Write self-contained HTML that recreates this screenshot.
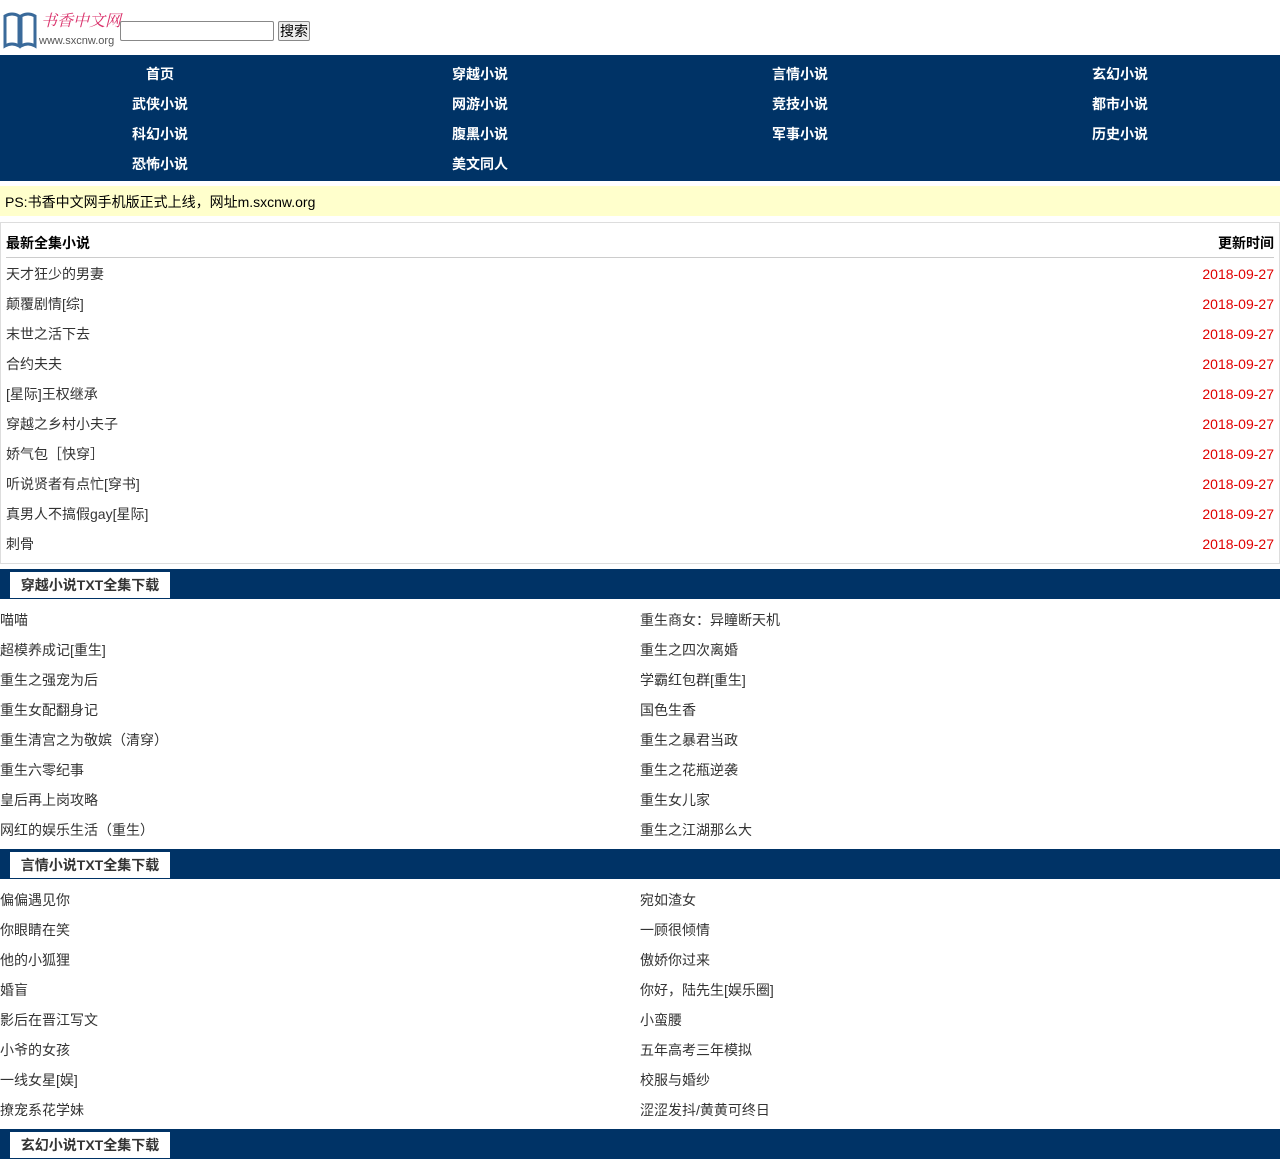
<!DOCTYPE html>
<html><head><meta charset="utf-8"><style>
*{margin:0;padding:0;box-sizing:border-box}
body{width:1280px;height:1167px;overflow:hidden;background:#fff;font-family:"Liberation Sans","Noto Sans CJK SC",sans-serif;font-size:14px;color:#333}
.head{height:55px;position:relative}
.logo{position:absolute;left:2px;top:8px;width:110px;height:42px}
.logo .t1{position:absolute;left:39px;top:1px;font-family:"Noto Serif CJK SC",serif;color:#d9306a;font-size:16px;letter-spacing:0;line-height:22px;white-space:nowrap;font-style:italic}
.logo .t2{position:absolute;left:37px;top:27px;font-size:11px;color:#555;line-height:13px;white-space:nowrap}
.search{position:absolute;left:120px;top:21px}
.search input{width:154px;height:20px;border:1px solid #888;border-radius:2px;vertical-align:top}
.search button{height:20px;font-size:14px;padding:0 1px;border:1px solid #888;border-radius:2px;background:#eee;vertical-align:top;margin-left:4px;font-family:"Noto Sans CJK SC",sans-serif;line-height:18px}
.nav{background:#003366;height:126px;padding-top:4px}
.nav div{display:flex;flex-wrap:wrap}
.nav a{width:320px;height:30px;line-height:30px;text-align:center;color:#fff;font-weight:bold;font-size:14px;text-decoration:none}
.notice{margin-top:5px;height:30px;line-height:32px;background:#ffffcc;color:#000;padding-left:5px;font-size:14px}
.box{margin-top:6px;border:1px solid #ddd;height:342px;padding:0 5px}
.box .hd{display:flex;justify-content:space-between;height:35px;line-height:40px;font-weight:bold;color:#000;border-bottom:1px solid #ccc}
.box .row{display:flex;justify-content:space-between;height:30px;line-height:32px;color:#333}
.box .row span:last-child{color:#e00000}
.sec{background:#003366;height:30px;position:relative;margin-top:5px}
.sec span{position:absolute;left:10px;top:3px;width:160px;height:26px;background:#fff;line-height:26px;text-align:center;font-weight:bold;color:#333;font-size:14px}
.list{display:flex;flex-wrap:wrap;padding-top:6px;padding-bottom:4px}
.list a{width:640px;height:30px;line-height:30px;color:#333;text-decoration:none}
.sec2{margin-top:0}
</style></head><body>
<div class="head">
 <div class="logo">
  <svg width="36" height="40" viewBox="0 0 36 40" style="position:absolute;left:0;top:2px">
   <path d="M3 6 Q10 2 17 6 L17 36 Q10 32 3 36 Z" fill="none" stroke="#3a6a9a" stroke-width="3"/>
   <path d="M19 6 Q26 2 33 6 L33 36 Q26 32 19 36 Z" fill="none" stroke="#3a6a9a" stroke-width="3"/>
  </svg>
  <div class="t1">书香中文网</div>
  <div class="t2">www.sxcnw.org</div>
 </div>
 <div class="search"><input type="text"><button>搜索</button></div>
</div>
<div class="nav"><div>
<a>首页</a><a>穿越小说</a><a>言情小说</a><a>玄幻小说</a>
<a>武侠小说</a><a>网游小说</a><a>竞技小说</a><a>都市小说</a>
<a>科幻小说</a><a>腹黑小说</a><a>军事小说</a><a>历史小说</a>
<a>恐怖小说</a><a>美文同人</a>
</div></div>
<div class="notice">PS:书香中文网手机版正式上线，网址m.sxcnw.org</div>
<div class="box">
<div class="hd"><span>最新全集小说</span><span>更新时间</span></div>
<div class="row"><span>天才狂少的男妻</span><span>2018-09-27</span></div>
<div class="row"><span>颠覆剧情[综]</span><span>2018-09-27</span></div>
<div class="row"><span>末世之活下去</span><span>2018-09-27</span></div>
<div class="row"><span>合约夫夫</span><span>2018-09-27</span></div>
<div class="row"><span>[星际]王权继承</span><span>2018-09-27</span></div>
<div class="row"><span>穿越之乡村小夫子</span><span>2018-09-27</span></div>
<div class="row"><span>娇气包［快穿］</span><span>2018-09-27</span></div>
<div class="row"><span>听说贤者有点忙[穿书]</span><span>2018-09-27</span></div>
<div class="row"><span>真男人不搞假gay[星际]</span><span>2018-09-27</span></div>
<div class="row"><span>刺骨</span><span>2018-09-27</span></div>
</div>
<div class="sec"><span>穿越小说TXT全集下载</span></div>
<div class="list">
<a>喵喵</a><a>重生商女：异瞳断天机</a>
<a>超模养成记[重生]</a><a>重生之四次离婚</a>
<a>重生之强宠为后</a><a>学霸红包群[重生]</a>
<a>重生女配翻身记</a><a>国色生香</a>
<a>重生清宫之为敬嫔（清穿）</a><a>重生之暴君当政</a>
<a>重生六零纪事</a><a>重生之花瓶逆袭</a>
<a>皇后再上岗攻略</a><a>重生女儿家</a>
<a>网红的娱乐生活（重生）</a><a>重生之江湖那么大</a>
</div>
<div class="sec sec2"><span>言情小说TXT全集下载</span></div>
<div class="list">
<a>偏偏遇见你</a><a>宛如渣女</a>
<a>你眼睛在笑</a><a>一顾很倾情</a>
<a>他的小狐狸</a><a>傲娇你过来</a>
<a>婚盲</a><a>你好，陆先生[娱乐圈]</a>
<a>影后在晋江写文</a><a>小蛮腰</a>
<a>小爷的女孩</a><a>五年高考三年模拟</a>
<a>一线女星[娱]</a><a>校服与婚纱</a>
<a>撩宠系花学妹</a><a>涩涩发抖/黄黄可终日</a>
</div>
<div class="sec sec2"><span>玄幻小说TXT全集下载</span></div>
</body></html>
